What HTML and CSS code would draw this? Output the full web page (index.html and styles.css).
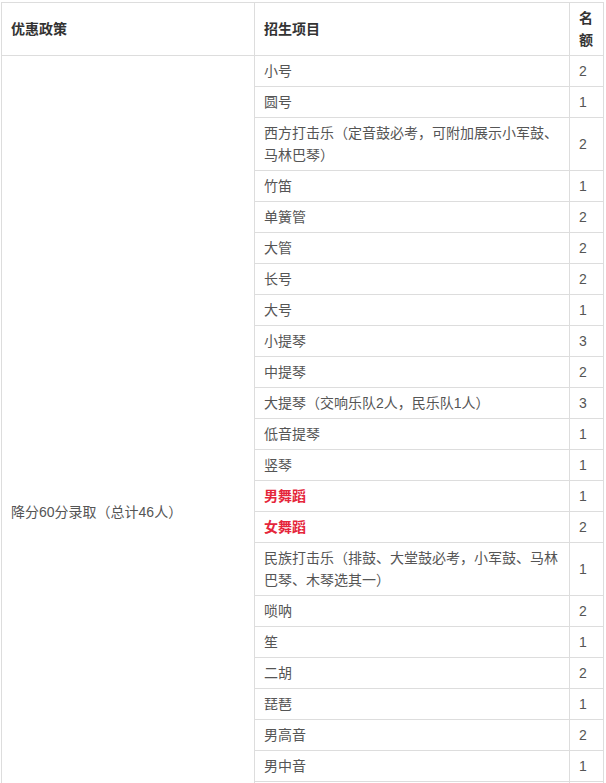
FILE: index.html
```html
<!DOCTYPE html>
<html lang="zh">
<head>
<meta charset="utf-8">
<link rel="stylesheet" href="styles.css">
</head>
<body>
<table class="quota">
  <colgroup>
    <col class="c1"><col class="c2"><col class="c3">
  </colgroup>
  <thead>
    <tr><th>优惠政策</th><th>招生项目</th><th>名额</th></tr>
  </thead>
  <tbody>
    <tr><td rowspan="30" class="policy">降分60分录取（总计46人）</td><td>小号</td><td>2</td></tr>
    <tr><td>圆号</td><td>1</td></tr>
    <tr><td>西方打击乐（定音鼓必考，可附加展示小军鼓、马林巴琴）</td><td>2</td></tr>
    <tr><td>竹笛</td><td>1</td></tr>
    <tr><td>单簧管</td><td>2</td></tr>
    <tr><td>大管</td><td>2</td></tr>
    <tr><td>长号</td><td>2</td></tr>
    <tr><td>大号</td><td>1</td></tr>
    <tr><td>小提琴</td><td>3</td></tr>
    <tr><td>中提琴</td><td>2</td></tr>
    <tr><td>大提琴（交响乐队2人，民乐队1人）</td><td>3</td></tr>
    <tr><td>低音提琴</td><td>1</td></tr>
    <tr><td>竖琴</td><td>1</td></tr>
    <tr><td class="red">男舞蹈</td><td>1</td></tr>
    <tr><td class="red">女舞蹈</td><td>2</td></tr>
    <tr><td>民族打击乐（排鼓、大堂鼓必考，小军鼓、马林巴琴、木琴选其一）</td><td>1</td></tr>
    <tr><td>唢呐</td><td>2</td></tr>
    <tr><td>笙</td><td>1</td></tr>
    <tr><td>二胡</td><td>2</td></tr>
    <tr><td>琵琶</td><td>1</td></tr>
    <tr><td>男高音</td><td>2</td></tr>
    <tr><td>男中音</td><td>1</td></tr>
    <tr><td>男低音</td><td>1</td></tr>
    <tr><td>女高音</td><td>2</td></tr>
    <tr><td>女中音</td><td>1</td></tr>
    <tr><td>钢琴</td><td>2</td></tr>
    <tr><td>古筝</td><td>1</td></tr>
    <tr><td>扬琴</td><td>1</td></tr>
  </tbody>
</table>
</body>
</html>
```

FILE: styles.css
```css
html, body {
  margin: 0;
  padding: 0;
  background: #ffffff;
}
body {
  font-family: "Liberation Sans", "Noto Sans CJK SC", sans-serif;
  font-size: 14px;
  color: #555555;
}
.quota {
  margin: 2px 0 0 1px;
  border-collapse: collapse;
  table-layout: fixed;
  width: 602px;
}
.c1 { width: 253px; }
.c2 { width: 315px; }
.c3 { width: 34px; }
.quota th,
.quota td {
  border: 1px solid #dddddd;
  padding: 4px 9px 4px 9px;
  line-height: 22px;
  text-align: left;
  vertical-align: middle;
  word-break: break-all;
}
.quota th {
  font-weight: bold;
  color: #333333;
}
.quota td.red {
  color: #e5263b;
  font-weight: bold;
}
```
